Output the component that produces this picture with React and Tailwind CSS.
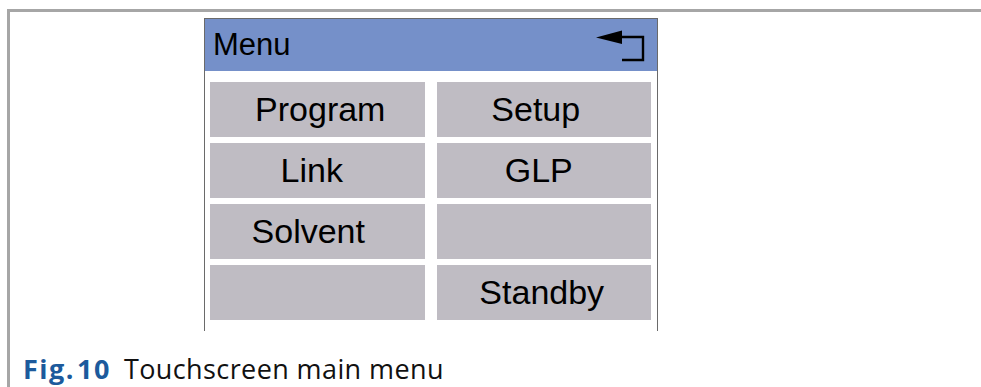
import React from 'react';

// Touchscreen main menu figure
const buttons = [
  { label: 'Program', cls: 'pl-[6px]' },
  { label: 'Setup', cls: 'pr-[16px]' },
  { label: 'Link', cls: 'pr-[11px]' },
  { label: 'GLP', cls: 'pr-[10px]' },
  { label: 'Solvent', cls: 'pr-[18px]' },
  { label: '', cls: '' },
  { label: '', cls: '' },
  { label: 'Standby', cls: 'pr-[4px]' },
];

function BackIcon() {
  return (
    <svg width="52" height="35" viewBox="594 28 52 35" className="block">
      <polygon points="596,37.5 622,30.5 622,44" fill="#000" />
      <polyline points="620,37 643,37 643,60 622,60" fill="none" stroke="#000" strokeWidth="2.4" />
    </svg>
  );
}

export default function App() {
  return (
    <main className="h-screen bg-white pt-[9px] pl-[7px] flex flex-col overflow-hidden">
      {/* Figure frame */}
      <div className="flex-1 border-l-[3px] border-t-[3px] border-[#a6a6a6] flex flex-col">
        {/* Screen panel */}
        <div className="ml-[194px] mt-[6px] w-[454px] border-l border-r border-t border-[#6a6a6a] pb-[11px]">
          <div className="h-[52px] bg-[#7590c9] flex items-center justify-between pl-[8px] pr-[11px]">
            <span className="font-['Liberation_Sans',Arial,sans-serif] text-[31px] text-black">Menu</span>
            <BackIcon />
          </div>
          <div className="grid grid-cols-2 gap-x-[12px] gap-y-[6px] pl-[5px] pr-[6px] pt-[11px]">
            {buttons.map((b, i) => (
              <div
                key={i}
                className={`h-[55px] bg-[#bfbcc3] flex items-center justify-center font-['Liberation_Sans',Arial,sans-serif] text-[34px] text-black ${b.cls}`}
              >
                {b.label}
              </div>
            ))}
          </div>
        </div>

        {/* Caption */}
        <p className="ml-[13px] mt-[24px] text-[27px] leading-none tracking-[0.4px] font-['Open_Sans',sans-serif] text-[#111]">
          <span className="font-bold text-[#1c5a9c] mr-[13px] tracking-[1.5px]">Fig.<span className="ml-[2px]">10</span></span>
          Touchscreen main menu
        </p>
      </div>
    </main>
  );
}
